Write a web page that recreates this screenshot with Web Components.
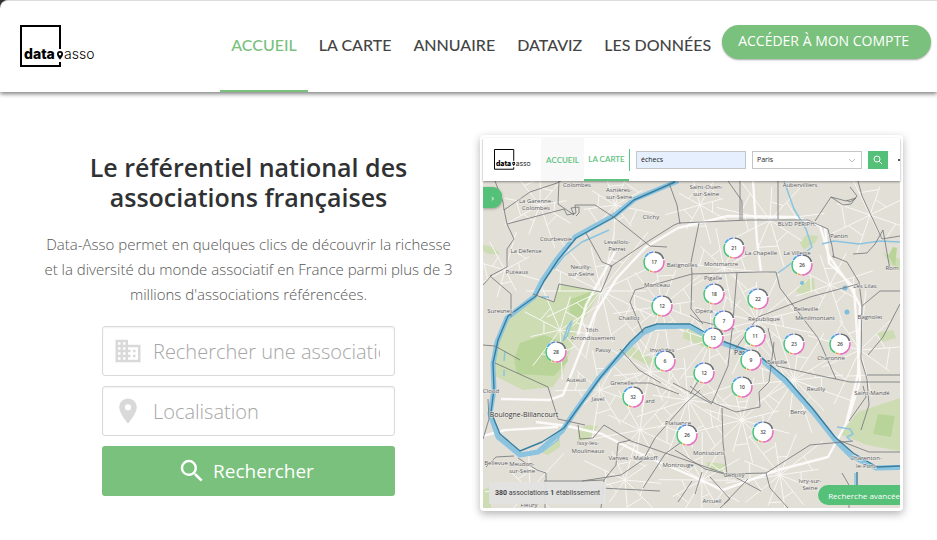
<!DOCTYPE html>
<html lang="fr">
<head>
<meta charset="utf-8">
<meta name="viewport" content="width=device-width, initial-scale=1">
<title>Data-Asso</title>
<style>
body{margin:0;background:#fff;color:#2f3133;font-family:"Open Sans","Noto Sans",sans-serif}
</style>
</head>
<body>
<asso-header></asso-header>
<asso-hero>
  <span slot="title">Le référentiel national des associations françaises</span>
  <span slot="text">Data-Asso permet en quelques clics de découvrir la richesse et la diversité du monde associatif en France parmi plus de 3 millions d'associations référencées.</span>
  <asso-search slot="search"></asso-search>
  <asso-preview slot="preview"></asso-preview>
</asso-hero>
<script>
function define(name, html, setup) {
  const template = document.createElement('template');
  template.innerHTML = html;
  customElements.define(name, class extends HTMLElement {
    constructor() {
      super();
      this.attachShadow({ mode: 'open' }).append(template.content.cloneNode(true));
      if (setup) setup(this.shadowRoot, this);
    }
  });
}

define('asso-logo', `
<style>
:host{display:block}
svg{display:block;width:100%;overflow:visible}
text{font-family:Inter,sans-serif;font-size:14px}
</style>
<svg viewBox="0 0 75 42" role="img" aria-label="data asso">
  <path d="M40 24V1H1V41H40V37" fill="none" stroke="#000" stroke-width="2"/>
  <text x="4" y="34" font-weight="800">data</text>
  <path fill-rule="evenodd" d="M40 26a3 3 0 0 1 3 3c0 2.4-3 5.6-3 5.6s-3-3.2-3-5.6A3 3 0 0 1 40 26zm0 1.8a1.3 1.3 0 1 0 0 2.6 1.3 1.3 0 0 0 0-2.6z"/>
  <text x="44" y="34" font-weight="300">asso</text>
</svg>`);

define('asso-nav-item', `
<style>
:host{display:flex}
a{display:flex;align-items:center;box-sizing:border-box;padding:0 11px 2px;border-bottom:2px solid transparent;color:#444;font:500 16px Lato,sans-serif;text-decoration:none;white-space:nowrap}
:host([active]) a{color:#79c17c;border-color:#79c17c}
</style>
<a href="#"><slot></slot></a>`);

define('asso-header', `
<style>
:host{display:block;background:#333}
header{display:flex;position:relative;box-sizing:border-box;height:92px;padding:0 6px 0 20px;background:#fff;border-top:1px solid #ddd;border-radius:8px 0 0 0;box-shadow:0 2px 4px rgba(0,0,0,.5)}
asso-logo{width:75px;margin-top:24px}
nav{display:flex;margin-left:auto}
button{align-self:flex-start;height:34px;margin-top:24px;padding:0 22px 3px 16px;border:0;border-radius:17px;background:#79c17c;color:#fff;font:14px "Open Sans",sans-serif;white-space:nowrap;box-shadow:0 1px 2px rgba(0,0,0,.35)}
</style>
<header>
  <asso-logo></asso-logo>
  <nav>
    <asso-nav-item active>ACCUEIL</asso-nav-item>
    <asso-nav-item>LA CARTE</asso-nav-item>
    <asso-nav-item>ANNUAIRE</asso-nav-item>
    <asso-nav-item>DATAVIZ</asso-nav-item>
    <asso-nav-item>LES DONNÉES</asso-nav-item>
  </nav>
  <button type="button">ACCÉDER À MON COMPTE</button>
</header>`);

define('asso-hero', `
<style>
:host{display:block}
main{display:grid;grid-template-columns:repeat(2,minmax(0,1fr));gap:20px;padding:43px 34px 24px 37px}
.intro{padding-top:17px;text-align:center}
h1{margin:0;padding:0 40px;font-size:25px;line-height:30px;font-weight:600}
p{margin:20px 0 19px;padding:0 4px;font-size:15px;line-height:25px;font-weight:300;color:#555}
</style>
<main>
  <section class="intro">
    <h1><slot name="title"></slot></h1>
    <p><slot name="text"></slot></p>
    <slot name="search"></slot>
  </section>
  <slot name="preview"></slot>
</main>`);

define('asso-field', `
<style>
:host{display:block;min-width:0}
div{display:flex;align-items:center;box-sizing:border-box;height:50px;padding:0 14px 0 10px;border:1px solid #d8dadc;border-radius:3px;background:#fff;box-shadow:inset 0 1px 2px rgba(0,0,0,.06)}
label{display:flex;margin-right:10px}
input{flex:1;min-width:0;padding:0;border:0;outline:0;background:none;font:300 20px "Open Sans",sans-serif;color:#444}
input::placeholder{color:#a6a6a6;opacity:1}
</style>
<div><label for="f"><slot></slot></label><input id="f" type="text"></div>`,
(root, host) => {
  const input = root.querySelector('input');
  input.placeholder = host.getAttribute('label');
  input.setAttribute('aria-label', host.getAttribute('label'));
});

define('asso-search', `
<style>
:host{display:block}
form{display:grid;grid-template-columns:minmax(0,1fr);gap:10px;padding:0 65px}
svg{width:30px;height:30px;fill:#d9d9d9}
button{display:flex;justify-content:center;align-items:center;gap:6px;height:50px;padding:0 12px 0 6px;border:0;border-radius:3px;background:#79c17c;color:#fff;font:19px "Open Sans",sans-serif}
button svg{fill:#fff}
</style>
<form>
  <asso-field label="Rechercher une association"><svg viewBox="0 0 24 24"><path d="M12 7V3H2v18h20V7H12zM6 19H4v-2h2v2zm0-4H4v-2h2v2zm0-4H4V9h2v2zm0-4H4V5h2v2zm4 12H8v-2h2v2zm0-4H8v-2h2v2zm0-4H8V9h2v2zm0-4H8V5h2v2zm10 12h-8v-2h2v-2h-2v-2h2v-2h-2V9h8v10zm-2-8h-2v2h2v-2zm0 4h-2v2h2v-2z"/></svg></asso-field>
  <asso-field label="Localisation"><svg viewBox="0 0 24 24"><path d="M12 2C8.13 2 5 5.13 5 9c0 5.25 7 13 7 13s7-7.75 7-13c0-3.87-3.13-7-7-7zm0 9.5a2.5 2.5 0 1 1 0-5 2.5 2.5 0 0 1 0 5z"/></svg></asso-field>
  <button type="button"><svg viewBox="0 0 24 24"><path d="M15.5 14h-.79l-.28-.27A6.47 6.47 0 0 0 16 9.5 6.5 6.5 0 1 0 9.5 16c1.61 0 3.09-.59 4.23-1.57l.27.28v.79l5 4.99L20.49 19l-4.99-5zm-6 0C7.01 14 5 11.99 5 9.5S7.01 5 9.5 5 14 7.01 14 9.5 11.99 14 9.5 14z"/></svg>Rechercher</button>
</form>`);

define('asso-map', `
<style>
:host{display:block}
svg{display:block;width:100%}
text{font-family:"Open Sans",sans-serif;font-size:6px;fill:#55585c;text-anchor:middle}
.halo text{stroke:#eeece7;stroke-width:1px;paint-order:stroke}
.pin text{font-size:5px;font-weight:600;fill:#444}
.halo .city{font-size:7px;fill:#333}
path{fill:none;stroke-linejoin:round}
.green path{fill:#cddcb2;stroke:none}
.green .deep{fill:#b9d499}
</style>
<svg viewBox="483 181 417 327" role="img" aria-label="Carte des associations à Paris">
  <rect x="483" y="181" width="417" height="327" fill="#e2dfd7"/>
  <g class="green">
    <path d="M537 296l17 6 5-18 42 7-8 13-16 27-14 41-10 15-30 3-30-15 4-35 10-22z"/>
    <path class="deep" d="M571 299l24-9-16 29-10-7zM520 343l24-8 20 8 4 18-14 15-37-2-3-15z"/>
    <path d="M624 353l6-8 23 14-4 7zM685 325l13 6 15 12-4 6-26-11zM578 429l10-4 10 1-9 13-11 2zM802 281l12-3 1 11-10 6-9-3zM840 434l18-22 42-14v53l-33-6zM483 245l10 2 7 7-11 0-6-3zM706 462l20 2-2 8-16-3zM483 490l8-4v22h-8zM883 253l17 6v12l-8-5zM876 333l17-3 3 8-13 4zM806 235l12 1-2 6-12 8-4-7z"/>
    <path class="deep" d="M878 414l17 2-4 21-18-3zM893 247l4 1-2 18-7-10z"/>
    <path d="M542 453l18-14v8l-12 8z"/>
  </g>
  <g id="roads"></g>
  <g stroke="#fff" stroke-width="2.4" opacity=".85">
    <path d="M646 247l-29 31-22 35-20 52-12 30-14 5-48-1M646 247l32-19 50-12 67 1 25 9 9 30 21 30 10 20-2 68-12 50-18 33-50 13-55 20-45-20-33-14-43-22-35-8-31-4M483 436l22-6 53-3M616 250l-30 55-8 30M753 181l4 60 4 30M825 228l4 35 25 24 6 94-13 42"/>
  </g>
  <g stroke="#8cc4e0">
    <path stroke-width="5" d="M678 181l-43 18-20 16-40 22-18 22-15 22-8 16-27 21-10 24-4 22 1 26-4 24 8 23 22 18 18-3 24-21 12-18 25-35 30-32 14-13 13-6 33-1 27 15 40 14 30 27 27 30 22 28 16 16 25 12 43-1"/>
    <path stroke-width="1.5" d="M554 269l10-13 18-14 27-12M855 473v30M900 242l-20-1-21 3-25-3-12 3M784 181l10 28 12 20 6 18-12 10-22 16M563 341l5-15 4-5-5 15-4 5M541 297l8 0M837 427l13 2 3 5-6 3 4 4M528 454l14-2 16-12 2-7M504 361l1-10M504 376v-6"/>
  </g>
  <g fill="#7fbddd"><circle cx="802" cy="283" r="2"/><circle cx="845" cy="288" r="2.5"/><circle cx="847" cy="312" r="2.5"/></g>
  <path stroke="#377fa0" stroke-width="1.4" d="M675 182l-41 18-20 17-38 21-18 22-14 21-8 15-28 20-10 24-5 23 1 26-3 23 9 22 20 17 22-9 22-14 12-17 24-33 30-36 15-14 12-4 33 0 27 15 40 15 29 24 27 31 22 28 18 16 24 14 43-2M857 472v32"/>
  <g stroke="#707276" stroke-width=".8">
    <path d="M495 181l8 21 1 8 26-18 27-9 4-2M559 181l-1 23 16 11-3-7 8-1v6l-3 3M504 209l3 15 57-15 3 6 9-2-1-8h20l20 13 35 28 17 1M507 224l7 15-7 10 0 18-17 9 21 18 0 23M586 233l16 29 10 4-11 26-42-8-5 18-21-8M610 267l37-25 27-17 5-2 71-3 58 0 20 9 4 17 2 12M669 183l8 22 3 19M483 285l9-10M699 223l-8 39 1 12-1 35 12 15M692 274l-57 16-5 12 13 31M778 181v38M740 181v39M728 181l14 20v19M815 221l16-24 15 4 10-3-6 4-4-2M831 197l12 8 8-1 6-8-7-9M858 181l4 15 20 43M853 254l14-1 8-9 8-14 7 40M832 256l15 6 12 20 3 24-1 53 6 20 2 26-8 25M858 284l-48 13-52 20-24 34M882 239l18-3M862 306l18-15h20M900 304l-17 33-15 18M867 375h33M483 345l12 1 25 14M495 363l31 14 22 10 10 32 27 6M578 425l2 14 13-1 11-13 27 16 37 13 67 23 26 14M488 399l1 20-6 20M486 467l10-10 18-1M518 458l19 12 9 3v8h36l22-1 12-15 2-22 13-3M582 481l39-6 22-15 12-22 30-34 15-14M643 488l22-34 19-14M722 408l1 35 4 31M712 404l-22-12-17-9M690 394l10-16 5-13M675 450l30 19 20 5 41-1 44-28 43-4M766 473l4 15 18 20M702 472l-7 22M724 504l24-25M710 477l20 22-10 9M692 274l66-2 18 0 4 16 38 50 18 41M690 315l9 6 25 6 10 2M737 273l-4 48-5 45-16 37M768 328l9 38 35 8 38 8 50 0M774 342l-5 40-10 10 1 15-24 5-27-11-19-15M849 421l17-24-3-11M838 440l31 12h31M842 473l7 12v23M628 383h22l29 11M620 349l19 21 22 13M545 480v28M604 480l-3 28M600 488l60 3M692 481l-14 21"/>
  </g>
  <g class="halo">
    <text x="577" y="187">Colombes</text><text x="619" y="192">Asnières-</text><text x="619" y="199">sur-Seine</text>
    <text x="536" y="203">La Garenne-</text><text x="536" y="210">Colombes</text><text x="556" y="241">Courbevoie</text>
    <text x="526" y="253">La Défense</text><text x="517" y="274">Puteaux</text><text x="500" y="313">Suresnes</text>
    <text x="651" y="219">Clichy</text><text x="617" y="244">Levallois-</text><text x="617" y="251">Perret</text>
    <text x="581" y="269">Neuilly-</text><text x="581" y="276">sur-Seine</text><text x="682" y="267">Batignolles</text>
    <text x="706" y="189">Saint-Ouen-</text><text x="706" y="196">sur-Seine</text><text x="800" y="187">Aubervilliers</text>
    <text x="839" y="238">Pantin</text><text x="761" y="255">La Chapelle</text><text x="797" y="255">La Villette</text>
    <text x="721" y="266">Montmartre</text><text x="713" y="280">Pigalle</text><text x="657" y="287">Monceau</text>
    <text x="629" y="320">Chaillot</text><text x="592" y="332">16th</text><text x="593" y="340">Arrondissement</text>
    <text x="603" y="352">Passy</text><text x="576" y="382">Auteuil</text><text x="622" y="385">Grenelle</text>
    <text x="662" y="352">Invalides</text><text x="704" y="313">Opéra</text><text x="764" y="321">République</text>
    <text x="806" y="311">Belleville</text><text x="815" y="320">Ménilmontant</text><text x="865" y="288">Les Lilas</text>
    <text x="870" y="319">Bagnolet</text><text x="777" y="364">Bastille</text><text x="831" y="360">Charonne</text>
    <text x="816" y="391">Reuilly</text><text x="872" y="395">Saint-Mandé</text><text x="798" y="414">Bercy</text>
    <text x="598" y="401">Javel</text><text x="650" y="403">ard</text><text x="678" y="425">Plaisance</text>
    <text x="588" y="445">Issy-les-</text><text x="588" y="453">Moulineaux</text><text x="633" y="460">Vanves - Malakoff</text>
    <text x="678" y="467">Montrouge</text><text x="709" y="455">Montsouris</text><text x="734" y="477">Gentilly</text>
    <text x="712" y="503">Arcueil</text><text x="866" y="460">Charenton-</text><text x="866" y="468">le-Pont</text>
    <text x="810" y="483">Ivry-sur-</text><text x="810" y="490">Seine</text><text x="496" y="465">Bellevue</text>
    <text x="522" y="466">Meudon-</text><text x="522" y="473">sur-Seine</text><text x="529" y="507">Fleury</text>
    <text x="797" y="226">BLVD PÉRIPH.</text><text x="491" y="393">Cloud</text>
    <text x="892" y="270">Rom</text>
    <text class="city" x="524" y="417">Boulogne-Billancourt</text><text class="city" x="742" y="355">Paris</text>
  </g>
  <g class="pin" id="pins"></g>
</svg>`, root => {
  const hubs = [[601,291,14,75],[662,306,12,55],[724,268,10,45],[757,321,14,65],[688,400,14,60],[742,420,12,55],[560,330,9,50],[794,380,14,62],[640,430,10,50],[540,205,9,45],[615,205,9,45],[770,220,9,55],[700,205,8,40],[860,350,9,60],[830,285,8,45],[650,372,10,45],[600,390,9,50],[702,480,12,48],[780,475,12,55],[530,490,8,50],[870,215,8,50],[625,480,9,45],[505,270,8,40],[710,340,10,50]];
  const point = (x, y, a, k) => `${(x + Math.cos(a) * k).toFixed(1)} ${(y + Math.sin(a) * k).toFixed(1)}`;
  let d = '';
  hubs.forEach(([x, y, n, r], h) => {
    for (let i = 0; i < n; i++) {
      const a = i * 2 * Math.PI / n + h * 0.37;
      const k = r * (0.6 + ((i * 7 + h * 3) % 5) / 10);
      d += `M${x} ${y}L${point(x, y, a, k)}`;
      if (i % 3) d += `M${point(x, y, a, k * 0.55)}L${point(x, y, a + 2 * Math.PI / n, k * 0.6)}`;
    }
  });
  root.getElementById('roads').innerHTML = `<path d="${d}" stroke="#f8f7f4" stroke-width="1"/>`;
  const pins = [[654,262,17],[734,248,21],[802,265,26],[662,306,12],[714,294,18],[758,299,22],[556,352,28],[665,361,6],[704,373,12],[724,321,7],[713,338,12],[755,336,11],[751,360,9],[794,344,23],[840,344,26],[742,387,10],[633,397,32],[687,435,26],[763,432,32]];
  const arcs = [['#6a6f74',1,19],['#e372bd',22,29],['#f0975a',52,5],['#4fc27a',58,24],['#42a5dc',83,8],['#6385dc',92,7]];
  root.getElementById('pins').innerHTML = pins.map(([x, y, n]) =>
    `<circle cx="${x}" cy="${y}" r="11" fill="#fff"/>` +
    arcs.map(([c, s, l]) => `<circle cx="${x}" cy="${y}" r="10" fill="none" stroke="${c}" stroke-width="1.6" pathLength="100" stroke-dasharray="${l} ${100 - l}" stroke-dashoffset="${-s}"  transform="rotate(-90 ${x} ${y})"/>`).join('') +
    `<text x="${x}" y="${y + 2}">${n}</text>`).join('');
});

define('asso-preview', `
<style>
:host{display:block;align-self:start;min-width:0}
*{box-sizing:border-box}
article{padding:3px;border-radius:4px;background:#fff;box-shadow:0 3px 9px rgba(0,0,0,.3)}
.bar{display:flex;align-items:center;position:relative;z-index:1;height:43px;padding-left:11px;background:#fff;box-shadow:0 1px 2px rgba(0,0,0,.4);font-family:Lato,sans-serif;font-size:8px}
asso-logo{flex:none;width:37px;margin-right:10px}
a{display:flex;align-items:center;justify-content:center;flex:none;height:43px;color:#5cc27d;text-decoration:none;font-weight:600}
a.home{width:43px;background:#f8f8f8}
a.map{width:45px;border-bottom:2px solid #5cc27d}
i{flex:none;width:1px;height:22px;margin-right:6px;background:#5cc27d}
input,select{flex:1 1 10px;min-width:0;height:18px;padding:0 4px;border:1px solid #c4c6c9;border-radius:0;background:#fff;font:7px "Open Sans",sans-serif;color:#222}
input{margin-right:6px;background:#e5effd}
select{appearance:none}
.sel{display:flex;flex:1 1 10px;min-width:0;margin-right:6px;position:relative}
.sel svg{position:absolute;right:7px;top:6px;width:6px;height:6px}
.bar button{flex:none;width:20px;height:18px;padding:4px 5px;border:0;background:#54c078;margin-right:10px}
.bar button svg{display:block;width:10px;height:10px}
b{flex:none;width:2px;height:2px;background:#555}
.stage{position:relative;overflow:hidden}
.tab{position:absolute;left:0;top:6px;width:19px;height:21px;padding:0;border:0;border-radius:0 9px 9px 0;background:#54c078;color:#fff;font:9px "Open Sans",sans-serif;box-shadow:0 1px 3px rgba(0,0,0,.3)}
.count{position:absolute;left:6px;bottom:4px;padding:0 6px;line-height:22px;background:rgba(226,226,226,.95);font-size:7px;color:#444;font-family:Roboto,sans-serif}
.adv{position:absolute;right:-10px;bottom:3px;height:20px;padding:0 10px;border:0;border-radius:10px;background:#54c078;color:#fff;font:8px "Open Sans",sans-serif;white-space:nowrap}
</style>
<article>
  <div class="bar">
    <asso-logo></asso-logo>
    <a class="home" href="#">ACCUEIL</a><a class="map" href="#">LA CARTE</a><i></i>
    <input type="text" value="échecs" aria-label="Mot-clé">
    <span class="sel"><select aria-label="Ville"><option>Paris</option></select><svg viewBox="0 0 6 6"><path d="M0 2l3 3 3-3" fill="none" stroke="#bbb"/></svg></span>
    <button type="button" aria-label="Rechercher"><svg viewBox="0 0 10 10"><g fill="none" stroke="#fff"><circle cx="4" cy="4" r="3"/><path d="M6 6l3 3"/></g></svg></button><b></b>
  </div>
  <div class="stage">
    <asso-map></asso-map>
    <button class="tab" type="button" aria-label="Ouvrir">›</button>
    <div class="count"><strong>380</strong> associations <strong>1</strong> établissement</div>
    <button class="adv" type="button">Recherche avancée</button>
  </div>
</article>`);
</script>
</body>
</html>
